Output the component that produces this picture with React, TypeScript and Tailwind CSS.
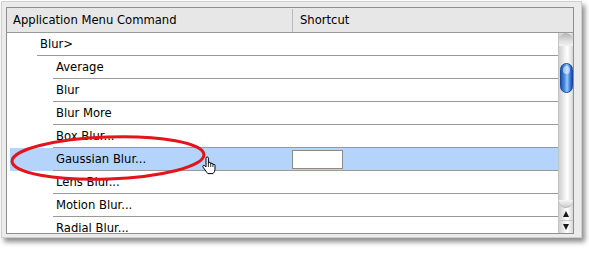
import React from 'react';

/* ── Data ─────────────────────────────────────────────────── */

interface Row {
  label: string;
  level: 0 | 1;
  selected?: boolean;
}

const rows: Row[] = [
  { label: 'Blur>', level: 0 },
  { label: 'Average', level: 1 },
  { label: 'Blur', level: 1 },
  { label: 'Blur More', level: 1 },
  { label: 'Box Blur...', level: 1 },
  { label: 'Gaussian Blur...', level: 1, selected: true },
  { label: 'Lens Blur...', level: 1 },
  { label: 'Motion Blur...', level: 1 },
  { label: 'Radial Blur...', level: 1 },
];

const font = { fontFamily: '"DejaVu Sans", "Lucida Grande", Verdana, sans-serif' };

/* ── Row ──────────────────────────────────────────────────── */

function CommandRow({ row }: { row: Row }) {
  return (
    <div className="pl-[3px]">
      <div className={row.selected ? 'bg-[#b4d4fb]' : ''}>
        <div
          className={`flex h-[23px] items-center border-b border-[#999] pt-[1px] ${
            row.level === 0 ? 'ml-[27px]' : 'ml-[43px]'
          }`}
        >
          <span
            className={`shrink-0 pl-[3px] ${
              row.level === 0 ? 'w-[253px]' : 'w-[237px]'
            }`}
          >
            {row.label}
          </span>
          <div className="flex flex-1 items-center pl-[2px]">
            {row.selected && (
              <div className="h-[19px] w-[51px] border border-[#8a8a8a] bg-white" />
            )}
          </div>
        </div>
      </div>
    </div>
  );
}

/* ── Aqua scrollbar ───────────────────────────────────────── */

function Scrollbar() {
  return (
    <div className="relative flex w-[15px] shrink-0 flex-col border-l border-[#c4c4c4] bg-[linear-gradient(to_right,#cfcfcf,#f4f4f4_45%,#ffffff_60%,#d6d6d6)]">
      {/* top cap */}
      <div className="h-[13px] rounded-t-full bg-[linear-gradient(to_bottom,#b3b3b3,#dedede_60%,#f3f3f3)]" />
      {/* track */}
      <div className="relative flex-1">
        <div className="absolute left-[1px] top-[17px] h-[30px] w-[13px] rounded-full border border-[#17479a] bg-[linear-gradient(to_right,#1f54b0,#4f92e6_35%,#98cbfb_55%,#3f80dc_80%,#184ea8)]">
          <div className="mx-auto mt-[2px] h-[8px] w-[7px] rounded-full bg-white/50" />
        </div>
      </div>
      {/* bottom cap of track */}
      <div className="h-[8px] rounded-b-full border-b border-[#b8b8b8] bg-[linear-gradient(to_bottom,#f6f6f6,#cfcfcf)]" />
      {/* arrows */}
      <div className="flex h-[13px] items-center justify-center border-b border-[#c8c8c8]">
        <div className="h-0 w-0 border-x-[3.5px] border-b-[6px] border-x-transparent border-b-[#1a1a1a]" />
      </div>
      <div className="flex h-[12px] items-center justify-center">
        <div className="h-0 w-0 border-x-[3.5px] border-t-[6px] border-x-transparent border-t-[#1a1a1a]" />
      </div>
    </div>
  );
}

/* ── Hand cursor ──────────────────────────────────────────── */

function HandCursor() {
  return (
    <svg width="16" height="19" viewBox="0 0 16 19" className="absolute left-[199px] top-[154px]">
      <path
        d="M5 9V2.2Q5 1 6.2 1Q7.4 1 7.4 2.2V7.4Q7.5 6.3 8.6 6.3Q9.7 6.3 9.7 7.5V8.2Q9.8 7.2 10.8 7.2Q11.9 7.2 11.9 8.4V9.1Q12 8.3 12.9 8.3Q14 8.3 14 9.5V13.2Q14 16 12 17.6H6.8Q5.9 16.6 4.8 15L2 11.1Q1.4 10.1 2.3 9.5Q3.1 9.1 3.9 9.9L5 11Z"
        fill="#fff"
        stroke="#000"
        strokeWidth="1"
        strokeLinejoin="round"
      />
      <path d="M7.4 7.4V11M9.7 8.2V11M11.9 9.1V11" stroke="#000" strokeWidth="0.8" />
    </svg>
  );
}

/* ── App ──────────────────────────────────────────────────── */

export default function App() {
  return (
    <div className="h-[253px] w-[589px] bg-white text-[11.6px] text-black" style={font}>
      <div className="relative ml-[1px] mt-[1px] h-[237px] w-[581px] border border-[#cfcfcf] bg-[#ebebeb] pl-[4px] pt-[5px] shadow-[3px_4px_5px_rgba(0,0,0,0.45)]">
        {/* Table */}
        <div className="flex h-[227px] w-[568px] flex-col overflow-hidden border border-[#8e8e8e] bg-white">
          {/* Header */}
          <div className="flex h-[25px] shrink-0 border-b border-[#9a9a9a] bg-[#e7e7e7] pt-[1px]">
            <div className="flex w-[286px] items-center border-r border-[#b9b9b9] pl-[6px]">
              Application Menu Command
            </div>
            <div className="flex flex-1 items-center pl-[7px]">Shortcut</div>
          </div>

          {/* Body */}
          <div className="flex min-h-0 flex-1">
            <div className="flex-1 overflow-hidden">
              {rows.map((r) => (
                <CommandRow key={r.label} row={r} />
              ))}
            </div>
            <Scrollbar />
          </div>
        </div>

        {/* Red annotation ellipse */}
        <svg
          width="230"
          height="70"
          viewBox="0 0 230 70"
          className="pointer-events-none absolute left-[-7px] top-[121px]"
        >
          <ellipse
            cx="113"
            cy="35"
            rx="96"
            ry="21"
            transform="rotate(-2 113 35)"
            fill="none"
            stroke="#e3141b"
            strokeWidth="3"
          />
        </svg>

        <HandCursor />
      </div>
    </div>
  );
}
